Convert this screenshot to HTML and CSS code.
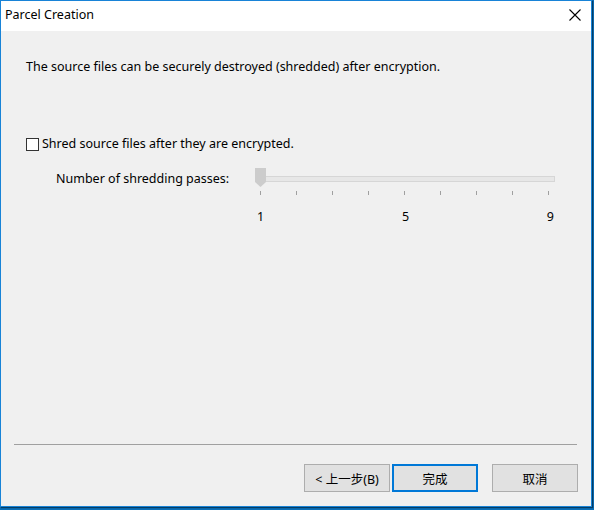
FILE: index.html
```html
<!DOCTYPE html>
<html>
<head>
<meta charset="utf-8">
<link rel="stylesheet" href="styles.css">
</head>
<body>
<div class="window">
  <div class="titlebar">
    <span class="title">Parcel Creation</span>
    <svg class="close" width="12" height="12" viewBox="0 0 12 12"><path d="M0.5 0.5 L11.5 11.5 M11.5 0.5 L0.5 11.5" stroke="#000" stroke-width="1.1" fill="none"/></svg>
  </div>
  <div class="content">
    <p class="intro">The source files can be securely destroyed (shredded) after encryption.</p>
    <label class="check-row"><span class="checkbox"></span><span>Shred source files after they are encrypted.</span></label>
    <div class="slider-row">
      <span class="slider-label">Number of shredding passes:</span>
      <div class="slider">
        <div class="track"></div>
        <svg class="thumb" width="11" height="19" viewBox="0 0 11 19"><path d="M0 0 H11 V14 L5.5 19 L0 14 Z" fill="#cccccc"/></svg>
        <div class="ticks"><i></i><i></i><i></i><i></i><i></i><i></i><i></i><i></i><i></i></div>
      </div>
    </div>
    <div class="scale"><span>1</span><span>5</span><span>9</span></div>
  </div>
  <div class="footer">
    <div class="separator"></div>
    <div class="buttons">
      <button class="btn">&lt; 上一步(B)</button>
      <button class="btn default">完成</button>
      <button class="btn cancel">取消</button>
    </div>
  </div>
</div>
</body>
</html>
```

FILE: styles.css
```css
html, body {
  margin: 0;
  padding: 0;
}
body {
  width: 594px;
  height: 510px;
  background: #0a6fb8;
  font-family: "Noto Sans", "Noto Sans CJK SC", sans-serif;
  font-size: 12.5px;
  color: #000;
}
.window {
  width: 592px;
  height: 507px;
  box-sizing: border-box;
  border: 1px solid #1883d7;
  background: #f0f0f0;
  display: flex;
  flex-direction: column;
  box-shadow: 1px 1px 1px rgba(0,0,0,0.45);
}
.titlebar {
  height: 30px;
  flex: none;
  background: #fff;
  display: flex;
  align-items: center;
  justify-content: space-between;
  padding: 0 10px 0 4px;
}
.title {
  line-height: 16px;
  margin-top: -2px;
}
.close {
  display: block;
  margin-top: -2px;
}
.content {
  flex: 1;
  padding: 0 0 0 25px;
}
.intro {
  margin: 28px 0 0;
  line-height: 16px;
}
.check-row {
  display: flex;
  align-items: center;
  gap: 3px;
  margin-top: 61px;
  line-height: 16px;
}
.checkbox {
  width: 11px;
  height: 11px;
  border: 1px solid #333;
  background: #fff;
  flex: none;
}
.slider-row {
  display: flex;
  align-items: flex-start;
  margin-top: 19px;
  padding-left: 30px;
}
.slider-label {
  line-height: 16px;
  width: 199px;
  margin-top: 0;
}
.slider {
  position: relative;
  width: 300px;
  height: 24px;
}
.track {
  margin: 5px 0 0 8px;
  height: 4px;
  border: 1px solid #d6d6d6;
  background: #e7e7e7;
  width: 290px;
}
.thumb {
  position: absolute;
  left: 0;
  top: -3px;
}
.ticks {
  display: flex;
  justify-content: space-between;
  width: 289px;
  margin: 9px 0 0 5px;
}
.ticks i {
  display: block;
  width: 1px;
  height: 4px;
  background: #a0a0a0;
}
.scale {
  display: flex;
  justify-content: space-between;
  width: 297px;
  margin: 14px 0 0 231px;
  line-height: 16px;
}
.footer {
  flex: none;
  padding: 0 14px 14px 13px;
}
.separator {
  height: 1px;
  background: #a0a0a0;
  margin-bottom: 19px;
}
.buttons {
  display: flex;
  justify-content: flex-end;
  gap: 2px;
  margin-right: -1px;
}
.btn {
  width: 86px;
  height: 28px;
  box-sizing: border-box;
  border: 1px solid #adadad;
  background: #e1e1e1;
  font-family: "Noto Sans", "Noto Sans CJK SC", sans-serif;
  font-size: 12.5px;
  color: #000;
  padding: 0;
}
.btn.default {
  border: 2px solid #0078d7;
}
.btn.cancel {
  margin-left: 12px;
}
```
